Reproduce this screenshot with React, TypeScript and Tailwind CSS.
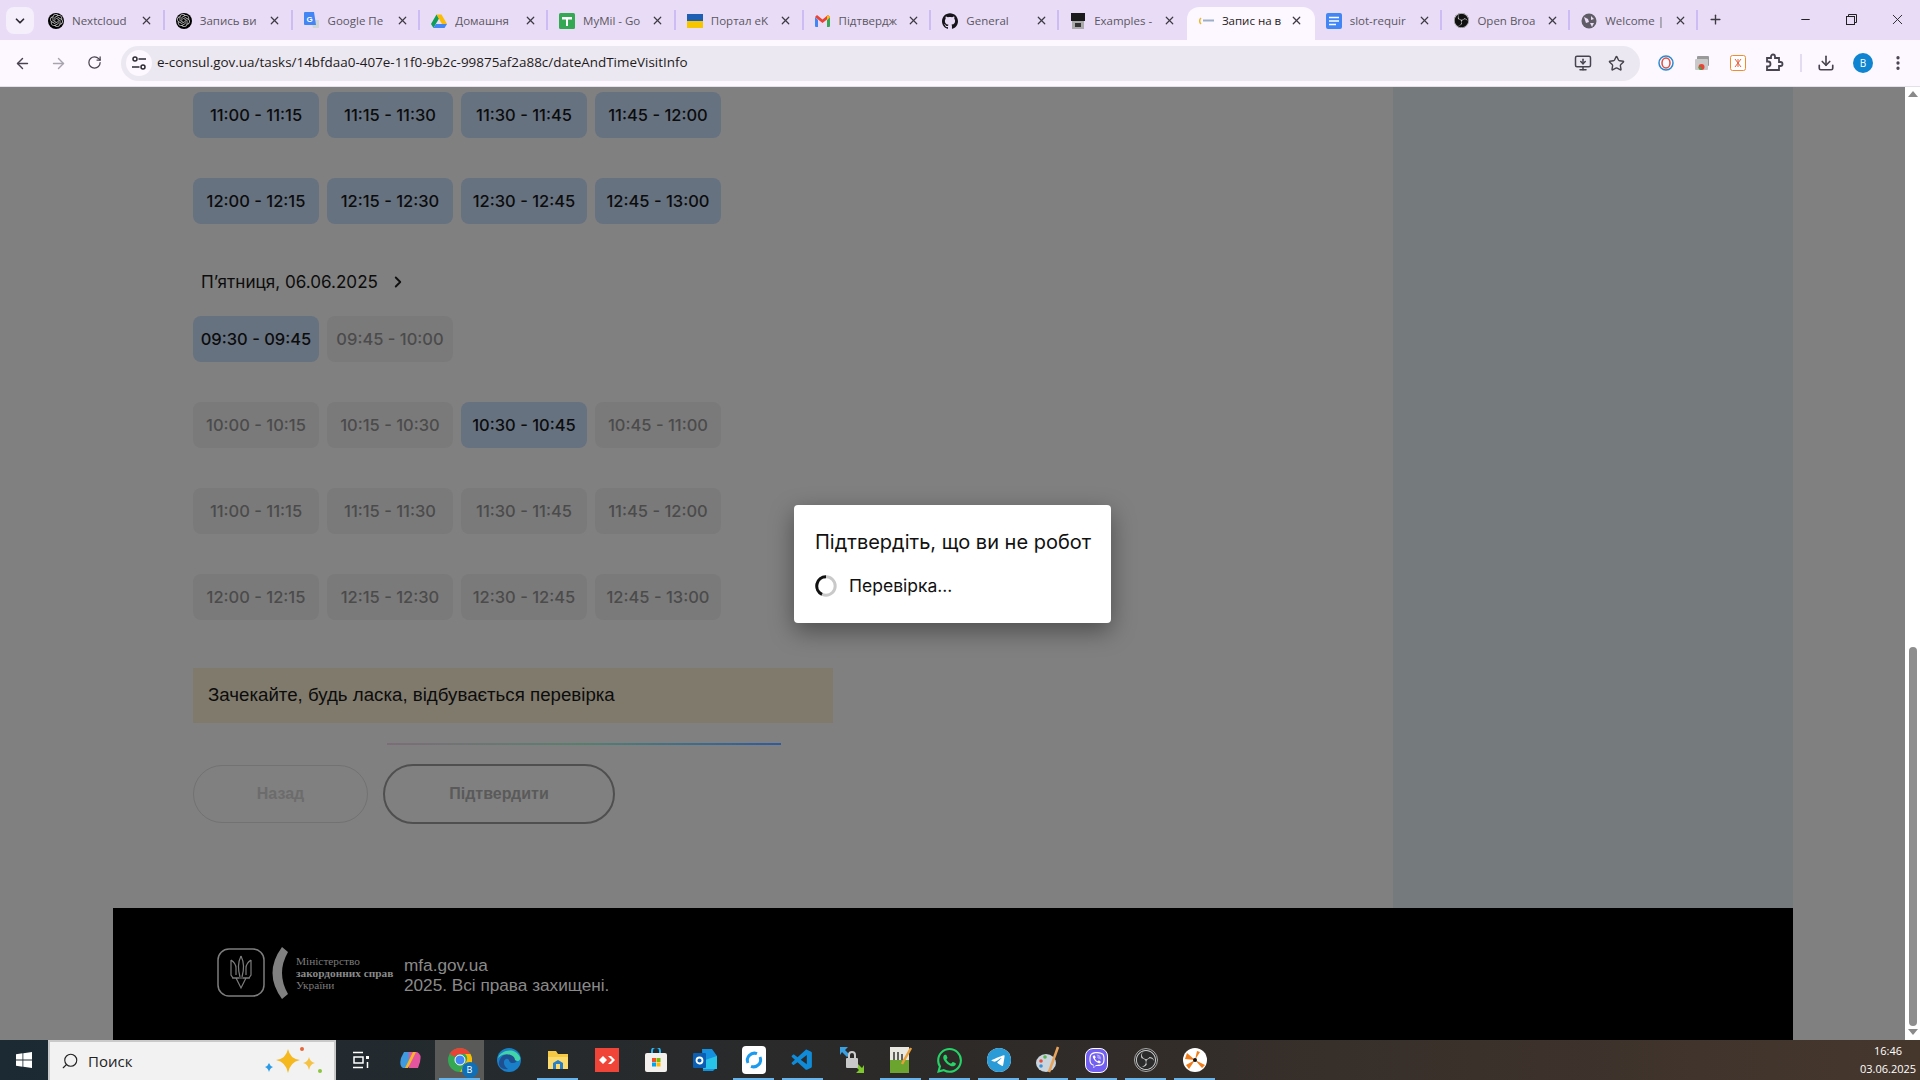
import React from "react";
import { ArrowLeft, ArrowRight, RotateCw, Star, Download, EllipsisVertical, X, Plus, Minus, MonitorDown, ChevronDown, ChevronRight, Search } from "lucide-react";
import { SiOpenai, SiObsstudio, SiWhatsapp, SiTelegram, SiViber, SiGithub } from "react-icons/si";
import { VscVscode } from "react-icons/vsc";

const Ext = () => (
  <svg width="20" height="20" viewBox="0 0 20 20" fill="none" stroke="#48444f" strokeWidth="1.8">
    <path d="M3 5h4V3.5a2 2 0 0 1 4 0V5h4v4h1.5a2 2 0 0 1 0 4H15v4H3v-3.5h1a2 2 0 0 0 0-5H3z" />
  </svg>
);

const Tune = () => (
  <svg width="16" height="16" viewBox="0 0 16 16" fill="none" stroke="#2d2a33" strokeWidth="1.5">
    <circle cx="4" cy="4" r="2" />
    <path d="M7.5 4H15M1 12h7.5" />
    <circle cx="12" cy="12" r="2" />
  </svg>
);

const Fav = ({ kind }: { kind: string }) => {
  switch (kind) {
    case "ai":
      return <span className="flex w-4 h-4 items-center justify-center rounded-full bg-black"><SiOpenai size={13} color="#bbb" /></span>;
    case "translate":
      return <svg width="16" height="17" viewBox="0 0 16 17"><path d="M7 8h8v8H9z" fill="#cfd6d3"/><path d="M1 0h9l2 13H1a1 1 0 0 1-1-1V1a1 1 0 0 1 1-1z" fill="#4285f4"/><text x="2.500" y="9.500" fontSize="8" fill="#fff" fontFamily="Liberation Sans" fontWeight="700">G</text></svg>;
    case "drive":
      return <svg width="16" height="16" viewBox="0 0 16 16"><path d="M5.500 1.500L0 11l2.500 4L8 5.500z" fill="#0f9d58"/><path d="M5.500 1.500h5L16 11h-5z" fill="#fbbc04"/><path d="M2.500 15L5 11h11l-2.500 4z" fill="#4285f4"/></svg>;
    case "sheet":
      return <svg width="16" height="16" viewBox="0 0 16 16"><rect width="16" height="16" rx="1.500" fill="#34a853"/><path d="M3 4h10v2.500H9V13H7V6.500H3z" fill="#fff"/></svg>;
    case "ua":
      return <svg width="16" height="14" viewBox="0 0 16 14"><rect width="16" height="7" fill="#1e5fb4"/><rect y="7" width="16" height="7" fill="#f6c700"/></svg>;
    case "gmail":
      return <svg width="15" height="12" viewBox="0 0 15 12"><path d="M0 2v9a1 1 0 0 0 1 1h2V5z" fill="#4285f4"/><path d="M15 2v9a1 1 0 0 1-1 1h-2V5z" fill="#34a853"/><path d="M0 2l2-2 5.500 4.500L13 0l2 2-7.500 6z" fill="#ea4335"/><path d="M13 0l2 2-3 3V1z" fill="#fbbc04"/></svg>;
    case "gh":
      return <SiGithub size={16} color="#17151b" />;
    case "ex":
      return <svg width="14" height="16" viewBox="0 0 14 16"><rect width="14" height="8" fill="#1b1b1b"/><rect x="1" y="8" width="12" height="8" fill="#aaa"/><rect x="4" y="10" width="6" height="4" fill="#333"/></svg>;
    case "active":
      return <svg width="16" height="16" viewBox="0 0 16 16"><path d="M3 5a4 4 0 0 0 0 6" stroke="#e8b92f" strokeWidth="1.500" fill="none"/><rect x="5" y="6.500" width="11" height="2" fill="#9bb0c8"/></svg>;
    case "doc":
      return <svg width="16" height="16" viewBox="0 0 16 16"><rect width="16" height="16" rx="2" fill="#4285f4"/><path d="M3 4.500h10M3 8h10M3 11.500h7" stroke="#fff" strokeWidth="1.700"/></svg>;
    case "obs":
      return <span className="flex w-[15px] h-[15px] items-center justify-center rounded-full bg-[#111]"><SiObsstudio size={15} color="#ccc" /></span>;
    default:
      return <svg width="16" height="16" viewBox="0 0 16 16"><circle cx="8" cy="8" r="7.500" fill="#5f5c66"/><path d="M3 4l4 2 1 3-3 1zM10 3l3 3-3 1zM9 10l4 0-2 4z" fill="#e9dcf6"/></svg>;
  }
};

const tabs = [
  ["ai", "Nextcloud"],
  ["ai", "Запись ви"],
  ["translate", "Google Пе"],
  ["drive", "Домашня"],
  ["sheet", "MyMil - Go"],
  ["ua", "Портал eK"],
  ["gmail", "Підтвердж"],
  ["gh", "General"],
  ["ex", "Examples -"],
  ["active", "Запис на в"],
  ["doc", "slot-requir"],
  ["obs", "Open Broa"],
  ["globe", "Welcome |"],
];

function TabBar() {
  return (
    <div className="flex h-10 bg-[#e9dcf6] items-stretch">
      <div className="w-[37px] shrink-0 pl-1.5 pt-[7px]">
        <div className="w-7 h-[27px] rounded-lg bg-[#f5eefb] flex items-center justify-center">
          <ChevronDown size={14} color="#2d2a33" strokeWidth={3} />
        </div>
      </div>
      <div className="w-[1661px] flex shrink-0 pt-[7px]">
        {tabs.map(([kind, label], i) => {
          const active = i === 9;
          const noSep = i === 8 || i === 9;
          return (
            <div
              key={i}
              className={`flex-1 relative flex items-center pl-[11px] pr-2 pb-[6px] min-w-0 ${active ? "bg-[#fdf7ff] rounded-t-xl" : ""}`}
            >
              <span className="w-4 h-4 shrink-0 flex items-center justify-center"><Fav kind={kind} /></span>
              <span
                className={`ml-[8px] w-[66px] whitespace-nowrap text-[11.500px] font-['Open_Sans',sans-serif] ${active ? "text-[#1d1b20]" : "text-[#5a5760]"}`}
              >
                {label}
              </span>
              <span className="ml-auto w-5 flex justify-center">
                <X size={13} color="#3d3a43" strokeWidth={2.2} />
              </span>
              {!noSep && <span className="absolute right-0 top-[3px] h-[20px] w-0.5 bg-[#cdbcf3]" />}
            </div>
          );
        })}
      </div>
      <div className="w-[30px] shrink-0 flex items-center justify-center pb-[1px] pl-1">
        <Plus size={15} color="#3d3a43" strokeWidth={2.2} />
      </div>
      <div className="flex-1" />
      <div className="flex items-center w-[138px] shrink-0 pb-[1px]">
        <span className="w-[46px] flex justify-center"><Minus size={13} color="#222" /></span>
        <span className="w-[46px] flex justify-center">
          <svg width="11" height="11" viewBox="0 0 11 11" fill="none" stroke="#222"><rect x=".5" y="2.500" width="8" height="8" /><path d="M2.500 2.500V.5h8v8H8.500" /></svg>
        </span>
        <span className="w-[46px] flex justify-center"><X size={17} color="#222" strokeWidth={1.3} /></span>
      </div>
    </div>
  );
}

function ToolBar() {
  return (
    <div className="h-[47px] bg-[#fdf7ff] border-b border-[#e4dfe8] flex items-center">
      <div className="flex w-[122px] shrink-0 pl-[4px]">
        <span className="w-9 flex justify-center"><ArrowLeft size={17} color="#48444f" strokeWidth={2} /></span>
        <span className="w-9 flex justify-center"><ArrowRight size={17} color="#a8a4ae" strokeWidth={2} /></span>
        <span className="w-9 flex justify-center"><RotateCw size={15} color="#48444f" strokeWidth={2} /></span>
      </div>
      <div className="w-[1519px] h-[35px] -ml-[1px] rounded-full bg-[#ece8f1] flex items-center pl-[5px] pr-[15px] shrink-0">
        <span className="w-[26px] h-[26px] rounded-full bg-[#fdf7ff] flex items-center justify-center"><Tune /></span>
        <span className="ml-[5px] pb-[1px] text-[13.450px] text-[#1d1b20] font-['Open_Sans',sans-serif]">e-consul.gov.ua/tasks/14bfdaa0-407e-11f0-9b2c-99875af2a88c/dateAndTimeVisitInfo</span>
        <span className="ml-auto flex items-center gap-[16px]">
          <MonitorDown size={18} color="#48444f" strokeWidth={2} />
          <Star size={17} color="#48444f" strokeWidth={2} />
        </span>
      </div>
      <div className="flex items-center ml-[18px] gap-[20px]">
        <svg width="16" height="16" viewBox="0 0 16 16" fill="none"><circle cx="8" cy="8" r="7" stroke="#2b8bd0" strokeWidth="1.500"/><ellipse cx="8" cy="8" rx="4" ry="5" stroke="#e04a3c" strokeWidth="1.500"/></svg>
        <svg width="16" height="16" viewBox="0 0 16 16"><rect x="3" y="1" width="12" height="10" rx="1" fill="#9a9a9a"/><rect x="1" y="4" width="13" height="11" rx="1" fill="#c9c9c9"/><circle cx="7.500" cy="12" r="3" fill="#ea4335"/><path d="M4.500 12a3 3 0 0 0 3 3v-3z" fill="#34a853"/></svg>
        <svg width="16" height="16" viewBox="0 0 16 16" fill="#fff" stroke="#ef8d2e"><rect x=".5" y=".5" width="15" height="15" rx="2"/><path d="M5 4l6 8M11 4l-6 8M8 4v8" stroke="#e8603c"/></svg>
        <span className="w-4 -mr-[2px] -ml-[2px]"><Ext /></span>
      </div>
      <span className="w-[2px] h-[18px] bg-[#e3dbf0] ml-[22px]" />
      <span className="ml-[15px]"><Download size={18} color="#48444f" strokeWidth={2.2} /></span>
      <span className="ml-[18px] w-5 h-5 rounded-full bg-[#0f84d0] text-white text-[10px] flex items-center justify-center font-['Open_Sans',sans-serif]">B</span>
      <span className="ml-[16px]"><EllipsisVertical size={18} color="#48444f" strokeWidth={2.4} /></span>
    </div>
  );
}

const Slot = ({ t, v }: { t: string; v: "on" | "off" }) => (
  <div
    className={`h-[46px] w-[126px] rounded-lg flex items-center justify-center text-[16.500px] font-medium font-['Inter',sans-serif] ${
      v === "on" ? "bg-[#667280] text-[#0c0c0c]" : "bg-[#7a7a7a] text-[#4b4b4b]"
    }`}
  >
    {t}
  </div>
);

const Row = ({ items, v }: { items: string[]; v: ("on" | "off")[] }) => (
  <div className="flex gap-2">
    {items.map((t, i) => (
      <Slot key={t} t={t} v={v[i]} />
    ))}
  </div>
);

function Main() {
  return (
    <div className="flex-1 bg-[#808080] overflow-hidden flex flex-col pl-[113px] relative">
      <div className="flex h-[821px] w-[1680px] shrink-0">
        <div className="w-[1280px] pl-[80px] pt-[5px]">
          <Row items={["11:00 - 11:15", "11:15 - 11:30", "11:30 - 11:45", "11:45 - 12:00"]} v={["on", "on", "on", "on"]} />
          <div className="mt-10">
            <Row items={["12:00 - 12:15", "12:15 - 12:30", "12:30 - 12:45", "12:45 - 13:00"]} v={["on", "on", "on", "on"]} />
          </div>
          <div className="mt-[46px] h-[24px] pl-2 flex items-center gap-[11px] text-[17.100px] font-['Inter',sans-serif] text-[#0c0c0c]">
            <span>П’ятниця, 06.06.2025</span>
            <ChevronRight size={18} color="#111" strokeWidth={2.5} />
          </div>
          <div className="mt-[22px]">
            <Row items={["09:30 - 09:45", "09:45 - 10:00"]} v={["on", "off"]} />
          </div>
          <div className="mt-10">
            <Row items={["10:00 - 10:15", "10:15 - 10:30", "10:30 - 10:45", "10:45 - 11:00"]} v={["off", "off", "on", "off"]} />
          </div>
          <div className="mt-10">
            <Row items={["11:00 - 11:15", "11:15 - 11:30", "11:30 - 11:45", "11:45 - 12:00"]} v={["off", "off", "off", "off"]} />
          </div>
          <div className="mt-10">
            <Row items={["12:00 - 12:15", "12:15 - 12:30", "12:30 - 12:45", "12:45 - 13:00"]} v={["off", "off", "off", "off"]} />
          </div>
          <div className="mt-12 w-[640px] h-[55px] bg-[#807a6c] flex items-center pl-[15px] text-[18.700px] font-['Liberation_Sans',sans-serif] text-[#0c0c0c]">
            Зачекайте, будь ласка, відбувається перевірка
          </div>
          <div className="mt-[20px] ml-[194px] w-[394px] h-0.5 bg-gradient-to-r from-[#7d6c78] via-[#55806f] to-[#2f5aa0]" />
          <div className="mt-[19px] flex items-center gap-4">
            <div className="w-[175px] h-[58px] rounded-full border border-[#727272] flex items-center justify-center text-[16px] font-bold text-[#6c6c6c] font-['Liberation_Sans',sans-serif]">Назад</div>
            <div className="w-[232px] h-[60px] -ml-px rounded-full border-2 border-[#4f4f4f] flex items-center justify-center text-[16px] font-bold text-[#5a5a5a] font-['Liberation_Sans',sans-serif]">Підтвердити</div>
          </div>
        </div>
        <div className="w-[400px] bg-[#757a7d]" />
      </div>
      <div className="w-[1680px] h-[132px] bg-black shrink-0 flex pl-[104px] pt-[37px]">
        <svg width="48" height="50" viewBox="0 0 48 50" fill="none" stroke="#7d7d7d" strokeWidth="1.500" className="shrink-0 mt-[3px]">
          <rect x="1" y="1" width="46" height="47" rx="11" />
          <path d="M24 8c-3 6-3 14-1 21M24 8c3 6 3 14 1 21" strokeWidth="1.200" />
          <path d="M14 12v15l2 3h6M34 12v15l-2 3h-6M14 12c3 2 5 4 5 8v7M34 12c-3 2-5 4-5 8v7" strokeWidth="1.200" />
          <path d="M15 30h18M19 30l5 10 5-10" strokeWidth="1.200" />
        </svg>
        <svg width="17" height="52" viewBox="0 0 17 52" className="ml-[6px] mt-[2px] shrink-0">
          <path d="M11 0l6 5Q5 26 17 47l-6 5Q-8 26 11 0z" fill="#808080" />
        </svg>
        <div className="ml-[8px] mt-[10px] w-[100px] text-[11.300px] leading-[12px] text-[#7b7b7b] font-['Liberation_Serif',serif] whitespace-nowrap">
          <div>Міністерство</div>
          <div className="font-bold text-[#8a8a8a]">закордонних справ</div>
          <div>України</div>
        </div>
        <div className="ml-[8px] mt-[10px] text-[17.200px] leading-[20px] font-['Liberation_Sans',sans-serif] text-[#8a8a8a] whitespace-nowrap">
          <div>mfa.gov.ua</div>
          <div>2025. Всі права захищені.</div>
        </div>
      </div>
      <div className="absolute left-[794px] top-[418px] w-[317px] h-[118px] bg-white rounded-sm shadow-[0_8px_24px_rgba(0,0,0,0.4)] pl-[21px] pt-[24px] font-['Inter',sans-serif] text-[#111]">
        <div className="text-[20px] leading-[27px]">Підтвердіть, що ви не робот</div>
        <div className="mt-[19px] flex items-center gap-[12px] text-[17.500px] leading-[22px]">
          <svg width="22" height="22" viewBox="0 0 22 22" fill="none" className="shrink-0">
            <circle cx="11" cy="11" r="9.200" stroke="#c9c9c9" strokeWidth="3" />
            <path d="M11 1.800A9.200 9.200 0 0 0 7 19.300" stroke="#111" strokeWidth="3" />
          </svg>
          Перевірка...
        </div>
      </div>
    </div>
  );
}

function ScrollBar() {
  return (
    <div className="w-[15px] shrink-0 bg-white flex flex-col items-center relative">
      <span className="mt-[4px] w-0 h-0 border-x-[5px] border-x-transparent border-b-[6px] border-b-[#8a8a8a]" />
      <span className="mt-[550px] w-[8px] h-[379px] rounded-full bg-[#8e8e8e]" />
      <span className="mt-auto mb-[5px] w-0 h-0 border-x-[5px] border-x-transparent border-t-[6px] border-t-[#8a8a8a]" />
    </div>
  );
}

const T = ({ c, u, a }: { c: React.ReactNode; u?: boolean; a?: boolean }) => (
  <div className={`w-[49px] h-10 shrink-0 flex items-center justify-center relative ${a ? "bg-[#5a5a58]" : ""}`}>
    {c}
    {u && <span className="absolute bottom-0 left-1 right-1 h-0.5 bg-[#67b3ea]" />}
  </div>
);

function TaskBar() {
  return (
    <div className="h-10 shrink-0 flex items-stretch bg-gradient-to-r from-[#1b2a33] via-[#2d2a28] to-[#46372d]">
      <div className="w-[48px] flex items-center justify-center shrink-0">
        <svg width="16" height="16" viewBox="0 0 16 16" fill="#fff"><path d="M0 2.200l6.500-.9v6.300H0zM7.300 1.200L16 0v7.600H7.300zM0 8.400h6.500v6.300L0 13.800zM7.300 8.400H16V16l-8.700-1.200z" /></svg>
      </div>
      <div className="w-[288px] shrink-0 bg-[#f2f2f2] border-2 border-b-0 border-[#c9c9c9] flex items-center pl-[11px] relative text-[15px] text-[#222] font-['Open_Sans',sans-serif]">
        <Search size={18} color="#222" strokeWidth={1.5} className="-scale-x-100" />
        <span className="ml-[9px]">Поиск</span>
        <svg width="62" height="32" viewBox="0 0 62 32" className="absolute right-[10px] top-[3px]">
          <path d="M26 4q2 10 12 11-10 2-12 13-2-11-12-13 10-1 12-11z" fill="#f5b81f" />
          <path d="M47 12q1 5 6 6-5 1-6 7-1-6-6-7 5-1 6-6z" fill="#f5c243" />
          <path d="M7 18q1 3 4 4-3 1-4 5-1-4-4-5 3-1 4-4z" fill="#2a9be8" />
          <circle cx="40" cy="4" r="2" fill="#e8673a" />
          <circle cx="58" cy="26" r="2" fill="#8cc63f" />
        </svg>
      </div>
      <T c={<svg width="18" height="18" viewBox="0 0 18 18" fill="none" stroke="#fff" strokeWidth="1.500"><path d="M1 1.500h10M1 16.500h10M2 6h9v6H2z" /><rect x="14" y="5" width="3" height="3" fill="#fff" stroke="none"/><path d="M15.500 11v6" /></svg>} />
      <span className="w-px shrink-0" />
      <T c={<svg width="24" height="24" viewBox="0 0 24 24"><path d="M5 4h9l-5 16H4Q0 18 2 10z" fill="#3f9ae0"/><path d="M10 4h8q5 2 3 10l-2 6h-9z" fill="#e455a0"/><path d="M14 4h3L9 20H6z" fill="#f7b52c"/></svg>} />
      <T a u c={
        <span className="relative w-6 h-6 block">
          <svg width="24" height="24" viewBox="0 0 24 24"><circle cx="12" cy="12" r="12" fill="#34a853"/><path d="M12 0a12 12 0 0 1 10.400 6H12a6 6 0 0 0-5.200 3L1.600 6A12 12 0 0 1 12 0z" fill="#ea4335"/><path d="M22.400 6A12 12 0 0 1 12 24l5.200-9a6 6 0 0 0 0-9z" fill="#fbbc04"/><circle cx="12" cy="12" r="5" fill="#4285f4" stroke="#fff"/></svg>
          <span className="absolute -right-1.5 -bottom-1.5 w-4 h-4 rounded-full bg-[#0f70b8] text-white text-[9px] flex items-center justify-center font-['Open_Sans',sans-serif]">B</span>
        </span>
      } />
      <T c={<svg width="24" height="24" viewBox="0 0 24 24"><circle cx="12" cy="12" r="12" fill="#1a7fc9"/><path d="M2 14C4 6 12 4 18 8c4 3 2 7-2 7-5 0-3-5-7-4-3 1-3 7 2 10C6 22 1 19 2 14z" fill="#1e4f91"/><path d="M1 10C3 3 17-2 23 9c1 4-3 5-5 3C18 7 8 3 1 10z" fill="#40d4a8"/></svg>} />
      <T u c={<svg width="24" height="24" viewBox="0 0 24 24"><path d="M2 3h8l2 3h10v15H2z" fill="#f6c945"/><path d="M2 9h20v12H2z" fill="#fbdb6e"/><path d="M7 21v-6l5-3 5 3v6z" fill="#2a7fc9"/><rect x="10" y="16" width="4" height="5" fill="#fbdb6e"/></svg>} />
      <T c={<div className="w-6 h-6 bg-[#f04438] flex items-center justify-center"><svg width="16" height="12" viewBox="0 0 16 12" fill="#fff"><path d="M4 2l4 4-4 4-4-4zM9 2h3l4 4-4 4H9l4-4z"/></svg></div>} />
      <T c={<svg width="24" height="24" viewBox="0 0 24 24"><path d="M8 5V3a4 4 0 0 1 8 0v2" fill="none" stroke="#29b6f6" strokeWidth="2"/><rect x="1" y="5" width="22" height="19" rx="2" fill="#f2efec"/><rect x="8" y="10" width="4" height="4" fill="#f25022"/><rect x="12.500" y="10" width="4" height="4" fill="#7fba00"/><rect x="8" y="14.500" width="4" height="4" fill="#00a4ef"/><rect x="12.500" y="14.500" width="4" height="4" fill="#ffb900"/></svg>} />
      <T c={<svg width="24" height="24" viewBox="0 0 24 24"><path d="M9 1h10l5 7v11l-4 4H10z" fill="#1490df"/><path d="M12 12l12-4v13H10z" fill="#28c4e8"/><rect y="5" width="13" height="15" rx="1" fill="#0a5fb5"/><circle cx="6.500" cy="12.500" r="3" fill="none" stroke="#fff" strokeWidth="1.800"/></svg>} />
      <T u c={<div className="w-6 h-7 bg-white rounded flex items-center justify-center"><svg width="20" height="20" viewBox="0 0 20 20" fill="none" stroke="#1c9bee" strokeWidth="3"><path d="M4 13A7 7 0 0 1 13 3.700M16 7a7 7 0 0 1-9 9.300" /></svg></div>} />
      <T u c={<VscVscode size={25} color="#0f8bd8" />} />
      <T c={<svg width="26" height="28" viewBox="0 0 26 28"><path d="M1 1h8L6 4l5 5-3 2-5-5-2 3z" fill="#3aa0e0"/><path d="M25 27h-8l3-3-5-5 3-2 5 5 2-3z" fill="#7ec72f"/><rect x="7" y="12" width="12" height="10" rx="1" fill="#c9c9c9"/><path d="M10 12V9a3 3 0 0 1 6 0v3" fill="none" stroke="#ccc" strokeWidth="2"/></svg>} />
      <T u c={<svg width="24" height="28" viewBox="0 0 24 28"><rect x="1" y="1" width="19" height="26" fill="#e8e8e0"/><rect x="1" y="14" width="19" height="13" fill="#6ba52f"/><path d="M5 6v8M9 6v8M13 8v6" stroke="#333" strokeWidth="1.500"/><path d="M22 2L13 18" stroke="#e8a03a" strokeWidth="2.500"/></svg>} />
      <T u c={<SiWhatsapp size={25} color="#25d366" />} />
      <T u c={<span className="w-6 h-6 rounded-full bg-white flex items-center justify-center"><SiTelegram size={24} color="#2a9bd6" /></span>} />
      <T u c={<svg width="26" height="28" viewBox="0 0 26 28"><ellipse cx="11" cy="17" rx="10" ry="9" fill="#c9d4dc"/><circle cx="6" cy="15" r="1.800" fill="#e84c3c"/><circle cx="10" cy="11" r="1.800" fill="#5ab552"/><circle cx="6" cy="20" r="1.800" fill="#3a8fd8"/><path d="M23 1L14 26" stroke="#e8a35a" strokeWidth="2.500"/></svg>} />
      <T u c={<span className="w-[23px] h-[25px] rounded-[8px] bg-[#7360f2] border border-white flex items-center justify-center"><SiViber size={16} color="#fff" /></span>} />
      <T u c={<span className="w-6 h-6 rounded-full bg-[#2b2b2b] border border-[#aaa] flex items-center justify-center"><SiObsstudio size={20} color="#d0d0d0" /></span>} />
      <T u c={<svg width="24" height="24" viewBox="0 0 24 24"><circle cx="12" cy="12" r="12" fill="#fff"/><path d="M12 12L4 5l-2 6zM12 12l-9 5 3 4zM12 12l7 8 3-3zM12 12l2-9 3 1z" fill="#f07d1a"/><circle cx="12" cy="12" r="2" fill="#111"/></svg>} />
      <div className="ml-auto w-[64px] text-[11px] leading-[18px] text-white flex flex-col items-center justify-center font-['Open_Sans',sans-serif]">
        <span>16:46</span>
        <span>03.06.2025</span>
      </div>
    </div>
  );
}

export default function App() {
  return (
    <div className="w-[1920px] h-[1080px] overflow-hidden flex flex-col">
      <TabBar />
      <ToolBar />
      <div className="flex h-[953px] shrink-0 overflow-hidden">
        <Main />
        <ScrollBar />
      </div>
      <TaskBar />
    </div>
  );
}
